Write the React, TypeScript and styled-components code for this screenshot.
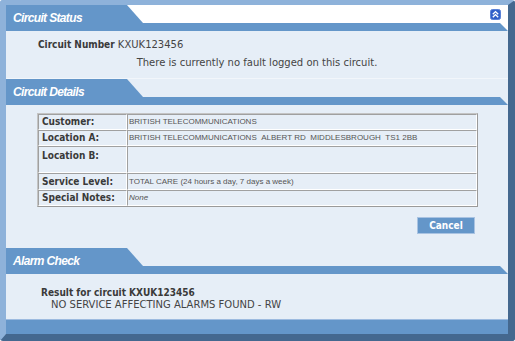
import styled, { createGlobalStyle } from "styled-components";

const GlobalStyle = createGlobalStyle`
  html, body {
    margin: 0;
    padding: 0;
    background: #ffffff;
  }
`;

const BLUE = "#6496c9";
const PANE = "#e6eef7";
const BOLD_FONT = `"DejaVu Sans Condensed", "DejaVu Sans", sans-serif`;
const TEXT_FONT = `"DejaVu Sans", Verdana, sans-serif`;

const Frame = styled.div`
  width: 515px;
  height: 341px;
  box-sizing: border-box;
  border-left: 6px solid #8eb2da;
  border-top: 5px solid #8eb2da;
  border-right: 7px solid #44688f;
  border-bottom: 7px solid #44688f;
  border-radius: 3px;
  background: ${PANE};
  display: flex;
  flex-direction: column;
  overflow: hidden;
`;

const Header = styled.div<{ $top: string }>`
  display: flex;
  height: 26px;
  flex: none;
  background: ${({ $top }) => $top};
`;

const Tab = styled.div`
  flex: none;
  width: 137px;
  background: ${BLUE};
  clip-path: polygon(0 0, 121px 0, 137px 18px, 137px 100%, 0 100%);
  color: #ffffff;
  font-family: "Liberation Sans", Arial, sans-serif;
  font-weight: bold;
  font-style: italic;
  font-size: 12px;
  letter-spacing: -0.65px;
  line-height: 26px;
  padding-left: 7px;
  box-sizing: border-box;
`;

const HeaderRest = styled.div`
  flex: 1;
  display: flex;
  flex-direction: column;
`;

const HeaderTop = styled.div`
  flex: 1;
  display: flex;
  justify-content: flex-end;
  align-items: flex-start;
  padding: 4px 7px 0 0;
`;

const HeaderBar = styled.div`
  height: 8px;
  background: ${BLUE};
  clip-path: polygon(0 0, calc(100% - 8px) 0, 100% 100%, 0 100%);
`;

const CollapseIcon = () => (
  <svg width="11" height="11" viewBox="0 0 11 11">
    <rect x="0.5" y="0.5" width="10" height="10" rx="2" fill="#2f5fc8" stroke="#5a82d8" />
    <path d="M2.8 5.2 L5.5 2.6 L8.2 5.2 M2.8 8.2 L5.5 5.6 L8.2 8.2" fill="none" stroke="#ffffff" strokeWidth="1.4" />
  </svg>
);

const StatusPane = styled.div`
  height: 48px;
  flex: none;
  display: flex;
  flex-direction: column;
  padding: 8px 0 0 32px;
  box-sizing: border-box;
  font-family: ${TEXT_FONT};
  font-size: 10px;
  color: #444444;
  border-bottom: 1px solid #f2f6fb;
`;

const Strong = styled.span`
  font-family: ${BOLD_FONT};
  font-weight: bold;
  color: #3a3a3a;
`;

const Centered = styled.div`
  text-align: center;
  margin: 7px 0 0 -32px;
`;

const DetailsPane = styled.div`
  height: 143px;
  flex: none;
  padding: 8px 30px 0 31px;
  box-sizing: border-box;
  display: flex;
  flex-direction: column;
`;

const Table = styled.table`
  width: 441px;
  border-collapse: separate;
  border-spacing: 0;
  border: 1px solid #c4c4c4;
  border-right-color: #9a9a9a;
  border-bottom-color: #9a9a9a;
`;

const Cell = styled.td<{ $label?: boolean; $h: number }>`
  box-sizing: content-box;
  height: ${({ $h }) => ($h > 20 ? $h - 5 : $h - 2)}px;
  padding: ${({ $h }) => ($h > 20 ? 3 : 0)}px 0 0 ${({ $label }) => ($label ? 3 : 1)}px;
  border: 1px solid #a0a0a0;
  border-right-color: #ffffff;
  border-bottom-color: #ffffff;
  vertical-align: ${({ $h }) => ($h > 20 ? "top" : "middle")};
  width: ${({ $label }) => ($label ? "84px" : "auto")};
  font-family: ${({ $label }) => ($label ? BOLD_FONT : `"Liberation Sans", Arial, sans-serif`)};
  font-size: ${({ $label }) => ($label ? "10px" : "8px")};
  line-height: 12px;
  font-weight: ${({ $label }) => ($label ? "bold" : "normal")};
  color: ${({ $label }) => ($label ? "#3a3a3a" : "#555555")};
`;

const Italic = styled.span`
  font-style: italic;
`;

const ButtonRow = styled.div`
  display: flex;
  justify-content: flex-end;
  width: 441px;
  padding: 10px 3px 0 0;
  box-sizing: border-box;
`;

const CancelButton = styled.button`
  width: 58px;
  height: 17px;
  background: ${BLUE};
  border: 1px solid #a9c3e2;
  color: #ffffff;
  font-family: ${BOLD_FONT};
  font-weight: bold;
  font-size: 10px;
  padding: 0;
  cursor: pointer;
`;

const AlarmPane = styled.div`
  flex: 1;
  padding: 13px 0 0 35px;
  font-family: ${TEXT_FONT};
  font-size: 10px;
  color: #444444;
  line-height: 12px;
`;

const AlarmLine = styled.div`
  padding-left: 10px;
`;

const FooterBar = styled.div`
  height: 15px;
  flex: none;
  background: ${BLUE};
  border-top: 1px solid #9dbbe0;
  box-sizing: border-box;
`;

const rows: { label: string; value: React.ReactNode; h: number }[] = [
  { label: "Customer:", value: "BRITISH TELECOMMUNICATIONS", h: 16 },
  {
    label: "Location A:",
    value: "BRITISH TELECOMMUNICATIONS\u00a0\u00a0ALBERT RD\u00a0\u00a0MIDDLESBROUGH\u00a0\u00a0TS1 2BB",
    h: 16,
  },
  { label: "Location B:", value: "", h: 27 },
  { label: "Service Level:", value: "TOTAL CARE (24 hours a day, 7 days a week)", h: 17 },
  { label: "Special Notes:", value: <Italic>None</Italic>, h: 16 },
];

export default function App() {
  return (
    <>
      <GlobalStyle />
      <Frame>
        <Header $top="#ffffff">
          <Tab>Circuit Status</Tab>
          <HeaderRest>
            <HeaderTop>
              <CollapseIcon />
            </HeaderTop>
            <HeaderBar />
          </HeaderRest>
        </Header>
        <StatusPane>
          <div>
            <Strong>Circuit Number</Strong> KXUK123456
          </div>
          <Centered>There is currently no fault logged on this circuit.</Centered>
        </StatusPane>

        <Header $top={PANE}>
          <Tab>Circuit Details</Tab>
          <HeaderRest>
            <HeaderTop />
            <HeaderBar />
          </HeaderRest>
        </Header>
        <DetailsPane>
          <Table>
            <tbody>
              {rows.map((r) => (
                <tr key={r.label}>
                  <Cell $label $h={r.h}>{r.label}</Cell>
                  <Cell $h={r.h}>{r.value}</Cell>
                </tr>
              ))}
            </tbody>
          </Table>
          <ButtonRow>
            <CancelButton>Cancel</CancelButton>
          </ButtonRow>
        </DetailsPane>

        <Header $top={PANE}>
          <Tab>Alarm Check</Tab>
          <HeaderRest>
            <HeaderTop />
            <HeaderBar />
          </HeaderRest>
        </Header>
        <AlarmPane>
          <Strong>Result for circuit KXUK123456</Strong>
          <AlarmLine>NO SERVICE AFFECTING ALARMS FOUND - RW</AlarmLine>
        </AlarmPane>
        <FooterBar />
      </Frame>
    </>
  );
}
